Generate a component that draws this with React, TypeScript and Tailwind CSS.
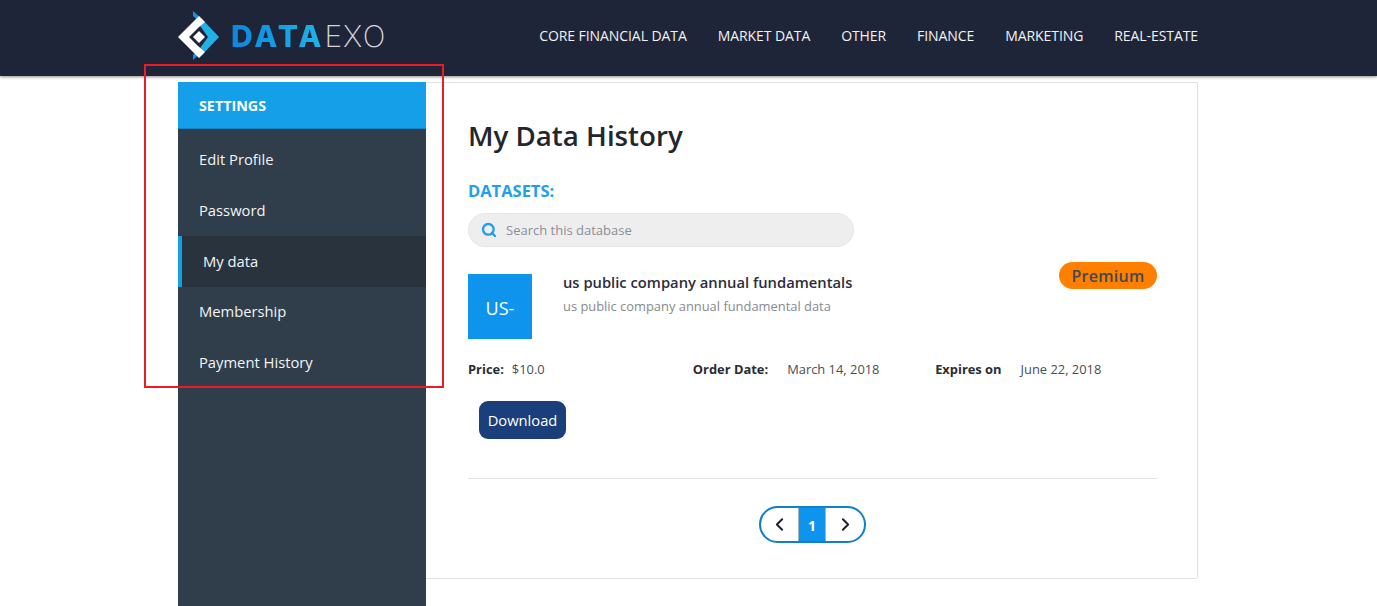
import { ChevronLeft, ChevronRight, Search } from "lucide-react";

const navLinks = ["CORE FINANCIAL DATA", "MARKET DATA", "OTHER", "FINANCE", "MARKETING", "REAL-ESTATE"];
const sideLinks = ["Edit Profile", "Password", "My data", "Membership", "Payment History"];

function Logo() {
  return (
    <div className="flex items-center">
      <svg width="44" height="52" viewBox="0 0 44 52" className="shrink-0">
        <polygon points="24,9 41,27 24,45 20,41 30,27 20,13" fill="#22b0e6" />
        <polygon points="15,1 25,10 23,13 15,6" fill="#1b8fe6" />
        <polygon points="15,50 25,41 23,38 15,45" fill="#1b8fe6" />
        <polygon points="0,27 21,6 27,12 20,18 11,27 20,36 27,42 21,48" fill="#ffffff" />
        <polygon points="21,21 27,27 21,33 15,27" fill="#ffffff" />
      </svg>
      <div className="ml-[9px] flex items-baseline text-[30px] leading-none font-['Inter',sans-serif]">
        <span className="bg-gradient-to-r from-[#0d86e0] to-[#20b4e6] bg-clip-text font-extrabold tracking-[3px] text-transparent">DATA</span>
        <span className="font-extralight tracking-[1px] text-[#d4d6da]">EXO</span>
      </div>
    </div>
  );
}

export default function App() {
  return (
    <div className="relative h-screen overflow-hidden bg-white font-['Open_Sans',sans-serif]">
      <header className="h-[76px] bg-[#1f2539] shadow-[0_1px_3px_rgba(0,0,0,0.45)]">
        <div className="ml-[178px] flex h-full w-[1020px] items-center justify-between pb-[4px]">
          <Logo />
          <nav className="mt-[-2px] flex items-center gap-[31px] text-[14px] tracking-[-0.08px] text-[#f2f2f2]">
            {navLinks.map((link) => (
              <a key={link}>{link}</a>
            ))}
          </nav>
        </div>
      </header>

      <div className="ml-[178px] mt-[6px] flex w-[1020px] items-start">
        <aside className="h-[524px] w-[248px] shrink-0 bg-[#303d4a]">
          <div className="flex h-[47px] items-center border-b border-[#1585c9] bg-[#169fe9] pl-[21px] pt-[1px] text-[14.3px] font-bold text-white">
            SETTINGS
          </div>
          <ul className="pt-[6px] text-[14.75px] text-[#f3f5f6]">
            {sideLinks.map((link) =>
              link === "My data" ? (
                <li key={link} className="flex h-[51px] items-center border-l-[4px] border-[#169fe9] bg-[#28333e] pb-[1px] pl-[21px]">
                  {link}
                </li>
              ) : (
                <li key={link} className="flex h-[50.5px] items-center pb-[2px] pl-[21px]">
                  {link}
                </li>
              ),
            )}
          </ul>
        </aside>

        <main className="h-[497px] flex-1 rounded-r-[2px] border border-l-0 border-[#e0e0e0] pl-[42px] pr-[40px]">
          <h1 className="mt-[32px] text-[27.7px] leading-[40px] font-semibold text-[#22262e]">My Data History</h1>
          <h2 className="mt-[25px] text-[16.5px] leading-[22px] font-bold text-[#1f9fed]">DATASETS:</h2>
          <div className="mt-[11px] flex h-[34px] w-[386px] items-center rounded-full border border-[#e6e6e6] bg-[#eeeeee] pl-[12px] text-[13px] text-[#8b8f96]">
            <Search size={16} strokeWidth={3.5} className="text-[#1f9fed]" />
            <span className="ml-[9px] pt-[1px]">Search this database</span>
          </div>

          <div className="relative mt-[27px] flex">
            <div className="flex h-[65px] w-[64px] items-center justify-center bg-[#0f94ee] pt-[3px] text-[18px] text-white">US-</div>
            <div className="ml-[31px]">
              <p className="mt-[-2px] text-[14.75px] leading-[20px] font-semibold text-[#2a2d3e]">us public company annual fundamentals</p>
              <p className="mt-[4px] text-[12.9px] leading-[20px] text-[#868a90]">us public company annual fundamental data</p>
            </div>
            <span className="absolute right-0 top-[-12px] flex h-[27px] w-[98px] items-center justify-center rounded-full bg-[#ff7f00] text-[16px] font-semibold tracking-[0.3px] text-[#3f4a55]">
              Premium
            </span>
          </div>

          <div className="mt-[21px] flex h-[20px] items-center text-[12.9px] text-[#4a4f57]">
            <b className="font-bold text-[#2a2d33]">Price:</b>
            <span className="ml-[8px] w-[181px]">$10.0</span>
            <b className="font-bold text-[#2a2d33]">Order Date:</b>
            <span className="ml-[19px] w-[148px]">March 14, 2018</span>
            <b className="font-bold text-[#2a2d33]">Expires on</b>
            <span className="ml-[19px]">June 22, 2018</span>
          </div>

          <button className="ml-[11px] mt-[21px] block h-[38px] w-[87px] rounded-[9px] bg-[#1a3f7a] text-[14.7px] text-white">Download</button>

          <div className="mt-[39px] border-t border-[#e2e2e2]" />

          <div className="mt-[27px] flex justify-center">
            <div className="flex h-[37px] w-[107px] items-stretch overflow-hidden rounded-full border-2 border-[#0f80cc]">
              <span className="flex w-[37px] items-center justify-center">
                <ChevronLeft size={21} strokeWidth={2.25} className="text-[#1c2230]" />
              </span>
              <span className="flex w-[28px] items-center justify-center border-x border-[#a8b4bd] bg-[#0f94ee] pt-[1px] text-[14px] font-bold text-white">1</span>
              <span className="flex flex-1 items-center justify-center">
                <ChevronRight size={21} strokeWidth={2.25} className="text-[#1c2230]" />
              </span>
            </div>
          </div>
        </main>
      </div>

      {/* red highlight drawn over the screenshot */}
      <div className="pointer-events-none absolute left-[144px] top-[64px] h-[324px] w-[300px] border-2 border-[#ed1c24]" />
    </div>
  );
}
